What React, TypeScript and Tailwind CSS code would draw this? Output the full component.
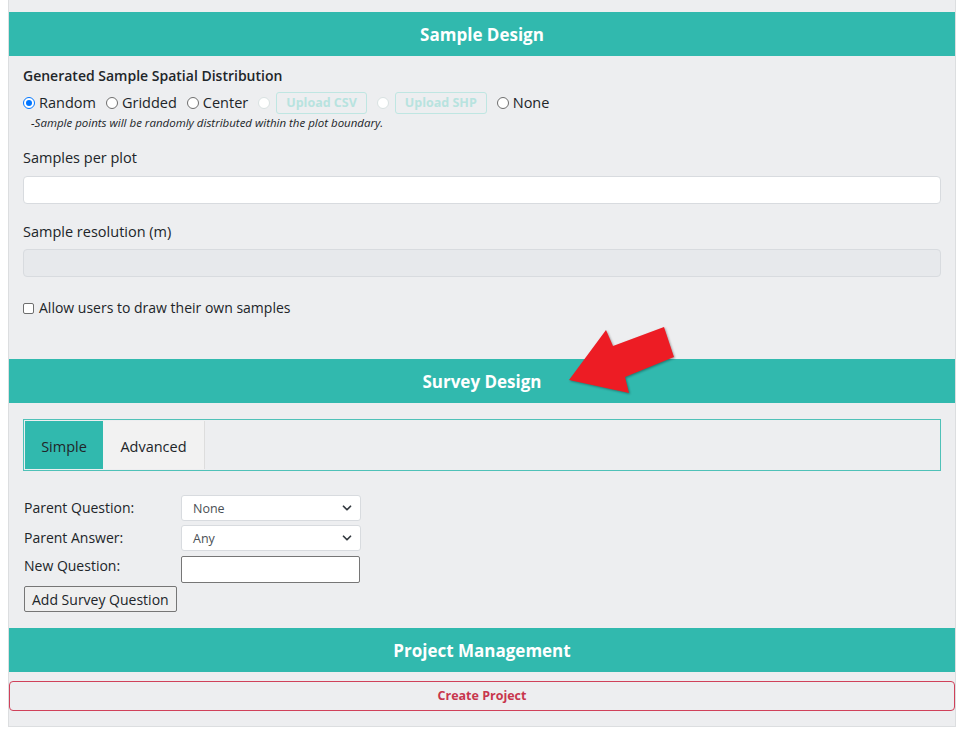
import { ChevronDown } from "lucide-react";

const font = { fontFamily: '"Open Sans", "Noto Sans", sans-serif' };

function Header({ title }: { title: string }) {
  return (
    <div className="h-[44px] bg-[#31b9ae] flex items-center justify-center pt-[2px]">
      <h2 className="text-white font-bold text-[17px]">{title}</h2>
    </div>
  );
}

function Select({ value }: { value: string }) {
  return (
    <div className="relative w-[180px] h-[26px] bg-white border border-[#d8dbdf] rounded-[3px] flex items-center pl-[11px] text-[12.5px] text-[#4a4f55]">
      <span className="pt-[3px]">{value}</span>
      <ChevronDown className="absolute right-[6px] top-[5px] w-[14px] h-[14px] text-[#343a40]" strokeWidth={3} />
    </div>
  );
}

function Radio({ label, checked, disabled }: { label?: string; checked?: boolean; disabled?: boolean }) {
  return (
    <label className="flex items-center gap-[4px]">
      <span
        className={`w-[12px] h-[12px] rounded-full border flex items-center justify-center bg-white ${
          checked ? "border-[#0075ff]" : disabled ? "border-[#d9e2e2]" : "border-[#6e6e6e]"
        }`}
      >
        {checked && <span className="w-[6px] h-[6px] rounded-full bg-[#0075ff]" />}
      </span>
      {label && <span>{label}</span>}
    </label>
  );
}

function UploadBtn({ label }: { label: string }) {
  return (
    <span className="h-[22px] px-[9px] border border-[#bfe6e2] rounded-[3px] text-[#b8e3df] font-bold text-[12.5px] flex items-center">
      {label}
    </span>
  );
}

export default function App() {
  return (
    <div className="min-h-screen bg-white text-[#212529]" style={font}>
      <div className="ml-[8px] w-[948px] bg-[#edeef0] border-x border-b border-[#dcdee0] pt-[12px] pb-[15px] relative">
        <Header title="Sample Design" />
        <div className="px-[14px] pt-[10px]">
          <div className="font-semibold text-[14px] leading-[20px]">Generated Sample Spatial Distribution</div>
          <div className="flex items-center gap-[10px] text-[14.5px] mt-[6px] h-[22px]">
            <Radio label="Random" checked />
            <Radio label="Gridded" />
            <Radio label="Center" />
            <div className="flex items-center gap-[6px]">
              <Radio disabled />
              <UploadBtn label="Upload CSV" />
            </div>
            <div className="flex items-center gap-[6px]">
              <Radio disabled />
              <UploadBtn label="Upload SHP" />
            </div>
            <Radio label="None" />
          </div>
          <div className="italic text-[11.5px] leading-[14px] ml-[8px] mt-[2px]">
            -Sample points will be randomly distributed within the plot boundary.
          </div>

          <div className="text-[14.5px] leading-[20px] mt-[18px]">Samples per plot</div>
          <div className="mt-[8px] h-[28px] bg-white border border-[#d8dbdf] rounded-[4px]" />

          <div className="text-[14.5px] leading-[20px] mt-[18px]">Sample resolution (m)</div>
          <div className="mt-[7px] h-[28px] bg-[#e7e9ec] border border-[#d8dbdf] rounded-[4px]" />

          <label className="flex items-center gap-[5px] text-[14px] leading-[20px] mt-[21px]">
            <span className="w-[11px] h-[11px] border border-[#6e6e6e] rounded-[2px] bg-white" />
            Allow users to draw their own samples
          </label>
        </div>

        <div className="mt-[41px]">
          <Header title="Survey Design" />
        </div>
        <div className="px-[14px] pt-[16px]">
          <div className="h-[52px] border border-[#4fc1b8] p-[1px] flex">
            <div className="w-[78px] bg-[#31b9ae] flex items-center justify-center text-[14.5px] pt-[3px]">Simple</div>
            <div className="w-[102px] bg-[#f2f2f2] border-r border-[#dddddd] flex items-center justify-center text-[14.5px] pt-[3px]">
              Advanced
            </div>
          </div>

          <div className="mt-[24px] flex flex-col gap-[4px] text-[14px] pl-[1px]">
            <div className="flex items-center">
              <span className="w-[157px] -mt-[2px]">Parent Question:</span>
              <Select value="None" />
            </div>
            <div className="flex items-center">
              <span className="w-[157px] -mt-[2px]">Parent Answer:</span>
              <Select value="Any" />
            </div>
            <div className="flex items-start">
              <span className="w-[157px] leading-[20px] pt-[1px]">New Question:</span>
              <div className="w-[179px] h-[27px] bg-white border border-[#767676] rounded-[2px] mt-[1px]" />
            </div>
            <div className="-mt-[1px]">
              <span className="inline-flex items-center h-[26px] px-[7px] bg-[#efefef] border border-[#767676] rounded-[2px] text-[14px]">
                Add Survey Question
              </span>
            </div>
          </div>
        </div>

        <div className="mt-[16px]">
          <Header title="Project Management" />
        </div>
        <div className="mt-[9px] h-[30px] border border-[#d0415a] rounded-[4px] flex items-center justify-center text-[#c8364d] font-bold text-[12.5px]">
          Create Project
        </div>

        <svg className="absolute left-[552px] top-[322px]" width="120" height="78" viewBox="560 322 120 78">
          <polygon
            points="568,380 605,330 612,346 663,327 673,357 624,377 628,393"
            fill="#ed1c24"
            style={{ filter: "drop-shadow(1px 1px 1px rgba(0,0,0,0.35))" }}
          />
        </svg>
      </div>
    </div>
  );
}
